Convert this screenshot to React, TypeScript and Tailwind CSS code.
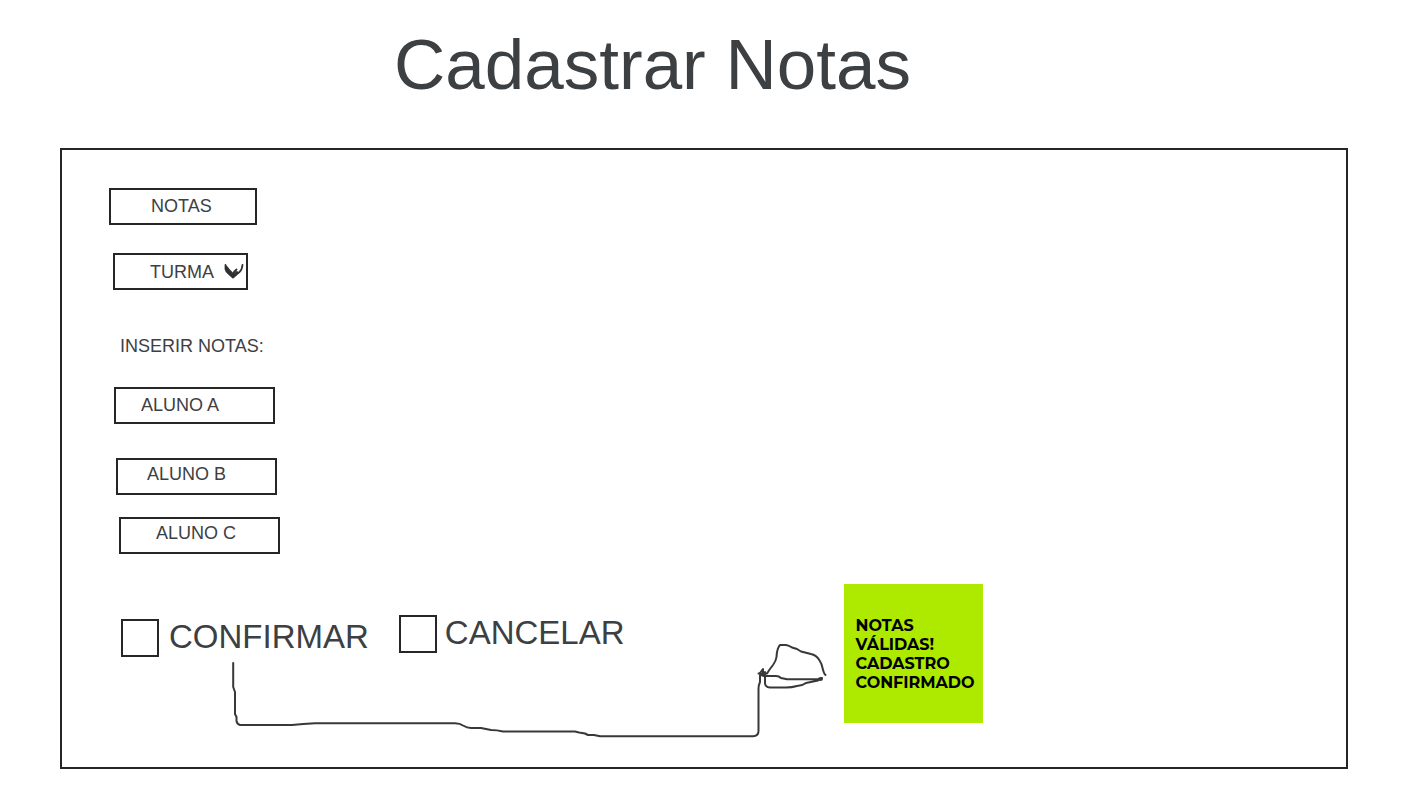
import React from "react";

const field =
  "block border-2 border-[#262626] bg-white text-lg text-[#3c4043] outline-none placeholder:text-[#3c4043] placeholder:opacity-100";

function Tick({ id, label, className }: { id: string; label: string; className: string }) {
  return (
    <div className={`flex items-start ${className}`}>
      <input
        id={id}
        type="checkbox"
        className="size-[38px] shrink-0 appearance-none border-2 border-[#262626] bg-white checked:bg-[#3c4043]"
      />
      <label htmlFor={id} className="text-[33px] leading-[36px] whitespace-nowrap">
        {label}
      </label>
    </div>
  );
}

function Connector() {
  return (
    <svg
      aria-hidden="true"
      viewBox="225 640 610 105"
      className="pointer-events-none absolute top-14 left-[163px] h-[105px] w-[610px]"
      fill="none"
      stroke="#38383a"
      strokeWidth="2"
      strokeLinecap="round"
      strokeLinejoin="round"
    >
      <path d="M233.200 663V687L235 692V714L236.500 717V721Q237 724 240 725H292Q303 724 315 723.300H455Q460 723.500 463 725.500Q467 728 471 728H481Q486 729 491 730Q497 730 503 731.500H575L579 732.500L585 733.500L588 735H594L600 736.300H753Q758.500 736 758.500 731V689Q758.500 685 760 682V675" />
      <path d="M758.500 673.500H767Q769 670 773 665Q776 661 776.500 657Q777 648 780 645H786Q789 645.500 792 647.500L797 649L801 651.500L811 654Q816 655 819 659.500Q822 664 822.500 668Q824 674 825.500 675" />
      <path d="M760 673L763 669V675M761 675L764 676H776Q779 676 781 678L787 679.300H819Q822 679 822 678L818 680.500L806 683Q802 686 797 686Q792 687.500 786 687.500H770Q765 687 765 683V672" />
      <ellipse cx="820.500" cy="679" rx="1.500" ry="1" />
    </svg>
  );
}

export default function App() {
  return (
    <main className="min-w-[1100px] bg-white pt-[25px] pb-[30px] font-['Liberation_Sans',Arial,sans-serif] text-[#3c4043]">
      <h1 className="pr-[117px] text-center text-[71px] leading-[80px]">Cadastrar Notas</h1>

      <form className="mt-[43px] mr-[74px] ml-[60px] border-2 border-[#262626] pt-[38px] pb-11">
        <div className="flex flex-col items-start">
          <button type="button" className={`${field} ml-[47px] h-[37px] w-[148px] pb-0.5 pl-10 text-left`}>
            NOTAS
          </button>

          <div className="relative mt-7 ml-[51px]">
            <select aria-label="Turma" className={`${field} h-[37px] w-[135px] appearance-none pl-[35px]`}>
              <option>TURMA</option>
            </select>
            <svg
              aria-hidden="true"
              viewBox="0 0 20 16"
              className="pointer-events-none absolute top-2.5 right-1 h-4 w-5"
              fill="none"
              stroke="#303030"
              strokeWidth="1.8"
              strokeLinecap="round"
              strokeLinejoin="round"
            >
              <path d="M1.500 2V6Q2 9 5 11L9 14.500L13 11L15.500 9Q18 7 18.500 2M2 3L6 8L8 10L9 13L10 9L12.500 6.500M2 5L6 10L9 13L13 9" />
            </svg>
          </div>

          <p className="mt-11 ml-[58px] text-lg leading-6">INSERIR NOTAS:</p>

          <input
            aria-label="Aluno A"
            placeholder="ALUNO A"
            className={`${field} mt-[29px] ml-[52px] h-[37px] w-[161px] pl-[25px]`}
          />
          <input
            aria-label="Aluno B"
            placeholder="ALUNO B"
            className={`${field} mt-[34px] ml-[54px] h-[37px] w-[161px] pb-1 pl-[29px]`}
          />
          <input
            aria-label="Aluno C"
            placeholder="ALUNO C"
            className={`${field} mt-[22px] ml-[57px] h-[37px] w-[161px] pb-1 pl-[35px]`}
          />
        </div>

        <div className="relative mt-[30px] flex items-start pl-[59px]">
          <Tick id="confirmar" label="CONFIRMAR" className="mt-[35px] gap-2.5" />
          <Tick id="cancelar" label="CANCELAR" className="mt-[31px] ml-[30px] gap-2" />
          <output className="ml-[219px] flex size-[139px] shrink-0 items-center bg-[#aeea00] pl-3 font-[Montserrat,Lato,sans-serif] text-base leading-[19px] font-bold text-black">
            <span>
              NOTAS
              <br />
              VÁLIDAS!
              <br />
              CADASTRO
              <br />
              CONFIRMADO
            </span>
          </output>
          <Connector />
        </div>
      </form>
    </main>
  );
}
